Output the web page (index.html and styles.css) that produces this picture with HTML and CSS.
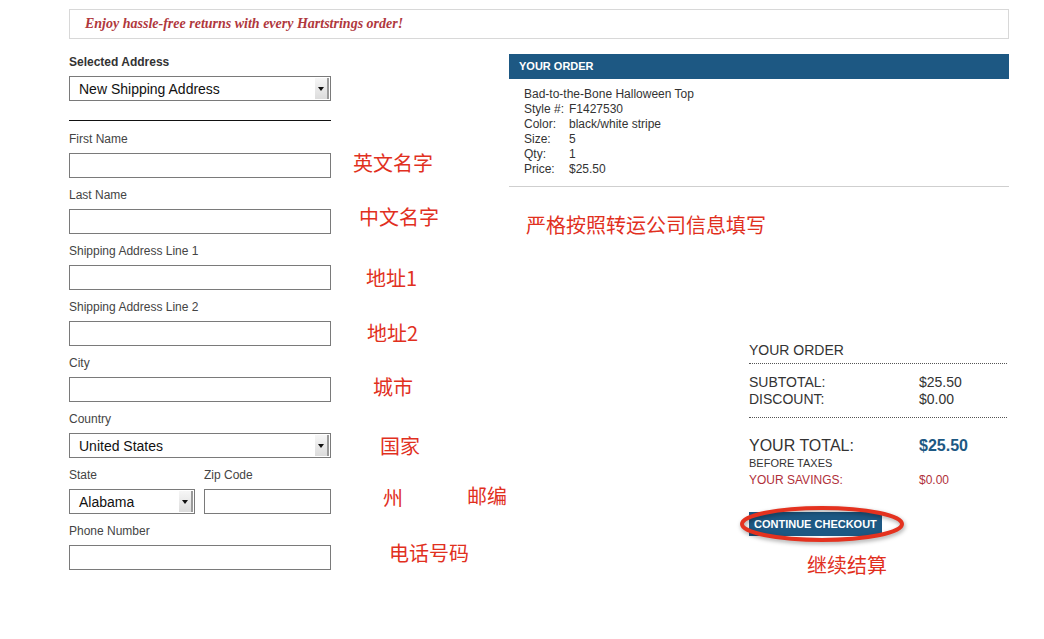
FILE: index.html
```html
<!DOCTYPE html>
<html lang="zh-CN">
<head>
    <meta charset="UTF-8">
    <title>Checkout - Shipping Address</title>
    <link rel="stylesheet" href="styles.css">
</head>
<body>
    <div class="page">
        <div class="banner">Enjoy hassle-free returns with every Hartstrings order!</div>

        <div class="main">
            <div class="address-form">
                <div class="label bold">Selected Address</div>
                <div class="select">
                    <span>New Shipping Address</span>
                    <span class="arrow"></span>
                </div>
                <hr class="divider">

                <div class="label">First Name</div>
                <div class="input"></div>
                <div class="label">Last Name</div>
                <div class="input"></div>
                <div class="label">Shipping Address Line 1</div>
                <div class="input"></div>
                <div class="label">Shipping Address Line 2</div>
                <div class="input"></div>
                <div class="label">City</div>
                <div class="input"></div>
                <div class="label">Country</div>
                <div class="select">
                    <span>United States</span>
                    <span class="arrow"></span>
                </div>
                <div class="row">
                    <div class="state">
                        <div class="label">State</div>
                        <div class="select">
                            <span>Alabama</span>
                            <span class="arrow"></span>
                        </div>
                    </div>
                    <div class="zip">
                        <div class="label">Zip Code</div>
                        <div class="input"></div>
                    </div>
                </div>
                <div class="label">Phone Number</div>
                <div class="input"></div>
            </div>

            <div class="order">
                <div class="order-head">YOUR ORDER</div>
                <div class="order-item">
                    <div>Bad-to-the-Bone Halloween Top</div>
                    <div class="detail"><span>Style #:</span>F1427530</div>
                    <div class="detail"><span>Color:</span>black/white stripe</div>
                    <div class="detail"><span>Size:</span>5</div>
                    <div class="detail"><span>Qty:</span>1</div>
                    <div class="detail"><span>Price:</span>$25.50</div>
                </div>

                <div class="summary">
                    <div class="summary-title">YOUR ORDER</div>
                    <div class="summary-lines">
                        <div class="line"><span>SUBTOTAL:</span>$25.50</div>
                        <div class="line"><span>DISCOUNT:</span>$0.00</div>
                    </div>
                    <div class="line total"><span>YOUR TOTAL:</span><strong>$25.50</strong></div>
                    <div class="before-taxes">BEFORE TAXES</div>
                    <div class="line savings"><span>YOUR SAVINGS:</span>$0.00</div>
                    <div class="checkout">
                        <button class="checkout-button">CONTINUE CHECKOUT</button>
                        <svg class="circle" width="170" height="42" viewBox="0 0 170 42">
                            <ellipse cx="84" cy="21" rx="80" ry="16" fill="none" stroke="#e4321f" stroke-width="4"/>
                        </svg>
                    </div>
                </div>
            </div>
        </div>
    </div>

    <!-- notes written over the screenshot -->
    <div class="note" style="left: 353px; top: 152px;">英文名字</div>
    <div class="note" style="left: 359px; top: 206px;">中文名字</div>
    <div class="note" style="left: 366px; top: 267px;">地址1</div>
    <div class="note" style="left: 367px; top: 322px;">地址2</div>
    <div class="note" style="left: 373px; top: 376px;">城市</div>
    <div class="note" style="left: 380px; top: 435px;">国家</div>
    <div class="note" style="left: 383px; top: 487px;">州</div>
    <div class="note" style="left: 467px; top: 485px;">邮编</div>
    <div class="note" style="left: 389px; top: 542px;">电话号码</div>
    <div class="note" style="left: 526px; top: 214px;">严格按照转运公司信息填写</div>
    <div class="note" style="left: 807px; top: 554px;">继续结算</div>
</body>
</html>
```

FILE: styles.css
```css
body {
    margin: 0;
    padding: 0;
    background-color: #fff;
    font-family: 'Liberation Sans', Arial, Helvetica, sans-serif;
    color: #333;
    position: relative;
    height: 639px;
    overflow: hidden;
}
.page {
    width: 940px;
    margin-left: 69px;
    padding-top: 9px;
}
.banner {
    height: 28px;
    line-height: 28px;
    border: 1px solid #d8d8d8;
    padding-left: 15px;
    font-family: 'Liberation Serif', 'Times New Roman', serif;
    font-style: italic;
    font-weight: bold;
    font-size: 14px;
    color: #b0383d;
}
.main {
    display: flex;
    gap: 178px;
    margin-top: 15px;
}
.address-form {
    width: 262px;
}
.label {
    font-size: 12px;
    line-height: 16px;
    color: #444;
    margin-bottom: 6px;
}
.label.bold {
    font-weight: bold;
    color: #333;
    margin-bottom: 6px;
}
.input {
    height: 23px;
    border: 1px solid #7a7a7a;
    background-color: #fff;
    margin-bottom: 9px;
}
.select {
    height: 23px;
    border: 1px solid #7a7a7a;
    display: flex;
    align-items: center;
    justify-content: space-between;
    font-size: 14px;
    color: #111;
    padding-left: 9px;
    margin-bottom: 9px;
}
.select .arrow {
    width: 12px;
    height: 21px;
    margin-right: 1px;
    background: linear-gradient(#f6f6f6, #dcdcdc);
    border-right: 2px solid #9a9a9a;
    position: relative;
}
.select .arrow::after {
    content: '';
    position: absolute;
    left: 3px;
    top: 9px;
    border-left: 3px solid transparent;
    border-right: 3px solid transparent;
    border-top: 4px solid #111;
}
.divider {
    border: none;
    border-top: 1.5px solid #111;
    margin: 19px 0 10px 0;
}
.row {
    display: flex;
    gap: 9px;
}
.state {
    width: 126px;
}
.zip {
    flex: 1;
}
.order {
    flex: 1;
}
.order-head {
    height: 25px;
    line-height: 25px;
    background-color: #1d5883;
    color: #fff;
    font-size: 11px;
    font-weight: bold;
    padding-left: 10px;
}
.order-item {
    padding: 8px 0 9px 15px;
    font-size: 12px;
    line-height: 15px;
    color: #333;
    border-bottom: 1px solid #cfcfcf;
}
.detail span {
    display: inline-block;
    width: 45px;
}
.summary {
    margin: 155px 0 0 240px;
    width: 258px;
    font-size: 14px;
    color: #333;
}
.summary-title {
    line-height: 17px;
    padding-bottom: 4px;
    border-bottom: 1px dotted #555;
}
.summary-lines {
    padding: 10px 0 9px 0;
    border-bottom: 1px dotted #555;
}
.line {
    line-height: 17px;
}
.line span {
    display: inline-block;
    width: 170px;
}
.total {
    font-size: 16px;
    line-height: 20px;
    margin-top: 18px;
}
.total strong {
    color: #1d5883;
}
.before-taxes {
    font-size: 11px;
    line-height: 14px;
}
.savings {
    font-size: 12px;
    line-height: 20px;
    color: #b0303a;
}
.checkout {
    position: relative;
    margin-top: 22px;
}
.checkout-button {
    background-color: #1d5883;
    color: #fff;
    border: none;
    font-family: 'Liberation Sans', Arial, sans-serif;
    font-size: 11px;
    font-weight: bold;
    height: 24px;
    padding: 0 5px;
    cursor: pointer;
}
.circle {
    position: absolute;
    left: -11px;
    top: -9px;
    filter: drop-shadow(1px 2px 2px rgba(0, 0, 0, 0.35));
}
.note {
    position: absolute;
    font-family: 'Noto Sans CJK SC', sans-serif;
    font-size: 20px;
    line-height: 22px;
    color: #e1301e;
}
```
